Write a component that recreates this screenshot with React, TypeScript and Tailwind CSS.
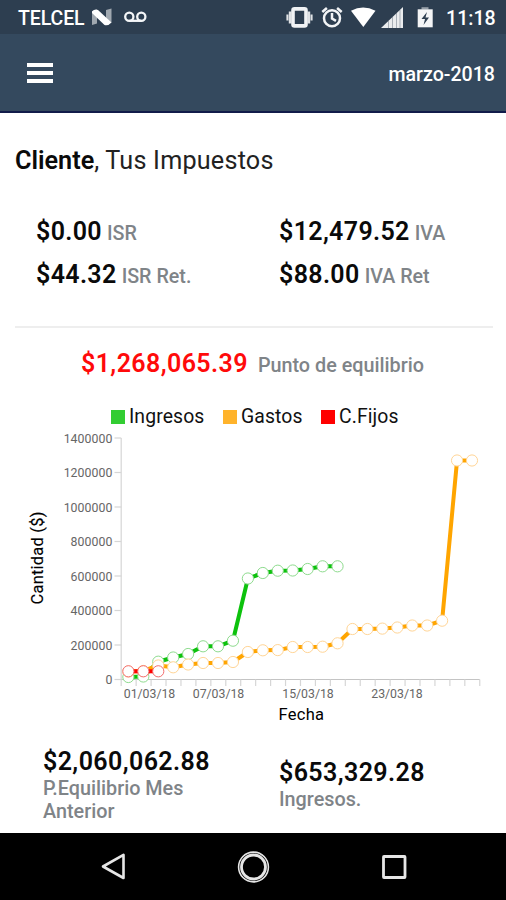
const STEP = 14.94;
const AXIS_X = 121.2;
const px = (i: number) => AXIS_X - 0.3 + STEP * (i + 0.5);

const ingresos = [677, 676.5, 661.7, 657.5, 654, 646.3, 646.3, 640.7, 578.5, 573, 570.7, 570.5, 569, 566.3, 566.3];
const gastos = [671.5, 671, 665.5, 667.3, 664.5, 663, 663, 662, 652, 650.3, 650.1, 647, 647, 646.7, 643.3, 629, 629, 628.6, 627.5, 625.5, 625.5, 620.7, 460.5, 460.5];
const fijos = [671.3, 671.3, 671.3];

const yTicks = [
  { label: "1400000", y: 438 },
  { label: "1200000", y: 472.5 },
  { label: "1000000", y: 507 },
  { label: "800000", y: 541.5 },
  { label: "600000", y: 576 },
  { label: "400000", y: 610.5 },
  { label: "200000", y: 645 },
  { label: "0", y: 679.5 },
];
const xLabels = [
  { label: "01/03/18", x: 149.5 },
  { label: "07/03/18", x: 218.5 },
  { label: "15/03/18", x: 308 },
  { label: "23/03/18", x: 397 },
];

function Series({ ys, line, ring }: { ys: number[]; line: string; ring: string }) {
  return (
    <g>
      <polyline points={ys.map((y, i) => `${px(i)},${y}`).join(" ")} fill="none" stroke={line} strokeWidth="4" strokeLinejoin="round" />
      {ys.map((y, i) => (
        <circle key={i} cx={px(i)} cy={y} r="5.6" fill="#fff" stroke={ring} strokeWidth="1" />
      ))}
    </g>
  );
}

function Chart() {
  return (
    <svg className="block h-[298px] w-full" viewBox="0 432 506 298">
      <g stroke="#d6d6d6" strokeWidth="1.2" fill="none">
        <path d="M121.2 438V679.5" />
        <path d="M121.2 679.5H479.8" stroke="#c4c4c4" />
        {yTicks.map((t) => (
          <path key={t.label} d={`M114.5 ${t.y}H121.2`} />
        ))}
        {Array.from({ length: 25 }, (_, i) => (
          <path key={i} d={`M${AXIS_X + i * STEP} 679.5V686`} />
        ))}
      </g>
      <g fill="#666" fontSize="12.3" fontFamily="Roboto, sans-serif">
        {yTicks.map((t) => (
          <text key={t.label} x="112.3" y={t.y + 4.7} textAnchor="end" textLength={t.label.length * 6.95}>{t.label}</text>
        ))}
        {xLabels.map((t) => (
          <text key={t.label} x={t.x} y="698" textAnchor="middle" textLength="51.5">{t.label}</text>
        ))}
      </g>
      <g fill="#000" fontSize="16.5" fontFamily="Roboto, sans-serif">
        <text x="278.5" y="719.5" textLength="45.5">Fecha</text>
        <text transform="translate(42.8 604.5) rotate(-90)" textLength="93" stroke="#000" strokeWidth=".15">Cantidad ($)</text>
      </g>
      <Series ys={ingresos} line="#0dc20d" ring="#8edb8e" />
      <Series ys={gastos} line="#ffa500" ring="#ffd596" />
      <Series ys={fijos} line="#ff0000" ring="#f36d6d" />
    </svg>
  );
}

function Tax({ amount, label }: { amount: string; label: string }) {
  return (
    <div className="flex h-[43px] items-baseline whitespace-nowrap">
      <span className="text-[25px] font-semibold tracking-[0.35px] text-[#0a0a0a]">{amount}</span>
      <span className="ml-[5px] text-[19.7px] font-medium text-[#7f8488]">{label}</span>
    </div>
  );
}

function StatusIcons() {
  return (
    <svg className="h-[34px] w-[160px]" viewBox="280 0 160 34" fill="#fff">
      <rect x="293" y="8.9" width="13" height="17" rx="1.5" fill="none" stroke="#f0f2f4" strokeWidth="3.6" />
      <path d="M286.400 14.500h2v6h-2zM288.8 11.500h2.600v12h-2.600zM307.600 11.500h2.600v12h-2.600zM310.600 14.500h2v6h-2z" opacity=".85" />
      <g fill="none" stroke="#f2f4f6" strokeWidth="2.500">
        <circle cx="332" cy="18.300" r="8" />
        <path d="M332 13v5.5l4 2.4M322.3 12l4.6-4M341.7 12l-4.6-4" />
      </g>
      <path d="M351 10.7Q363 4.5 375.5 10.7L363.3 27z" />
      <path d="M403 7v21H381z" opacity=".9" />
      <path d="M388.5 21v7M392.5 17v11M396.5 13v15M400 10v18" stroke="#2d3e50" strokeWidth="1" opacity=".35" />
      <path d="M421.500 7.200h7v2.300h-7z" opacity=".5" />
      <path d="M417.700 9.300h15v18h-15z" opacity=".95" />
      <path d="M427 12l-5.500 7h3.500l-1.500 6 5.500-7.500h-3.500z" fill="#2d3e50" />
    </svg>
  );
}

function Legend({ color, label }: { color: string; label: string }) {
  return (
    <div className="flex items-center">
      <span className={`mr-[4px] size-[14px] ${color}`} />
      <span className="text-[19.4px] leading-6 tracking-[0.1px] text-[#111]">{label}</span>
    </div>
  );
}

export default function App() {
  return (
    <div className="flex h-[900px] w-[506px] flex-col overflow-hidden bg-white font-['Roboto',sans-serif]">
      <div className="flex h-[34px] shrink-0 items-center bg-[#2d3e50] pl-[18px] text-white">
        <span className="w-[68px] pt-[3px] text-[19.5px] font-medium tracking-[-0.1px]">TELCEL</span>
        <svg className="ml-[4px] h-[34px] w-[62px]" viewBox="90 0 62 34" fill="#fff">
          <path d="M92 11l5-1.500v14l-5 1.500zM106 10l5.500-1.500v14l-5.500 2z" opacity=".55" />
          <path d="M92 11.500q3-3 6-1.500l13.500 12.500q-3 3.500-7 2.500L92 13z" />
          <g fill="none" stroke="#f4f6f8" strokeWidth="2.300">
            <circle cx="129.300" cy="16.700" r="4.100" />
            <circle cx="141.300" cy="16.700" r="4.100" />
            <path d="M129.300 20.800h12" />
          </g>
        </svg>
        <div className="ml-auto flex items-center">
          <StatusIcons />
          <span className="w-[66px] pl-[6px] pt-[3px] text-[19.6px] font-medium">11:18</span>
        </div>
      </div>
      <header className="flex h-[79px] shrink-0 items-center justify-between border-b-2 border-[#111b4a] bg-[#34495e] pl-[27px] pr-[11px] text-white">
        <div className="mt-[1px] flex flex-col gap-[4px]">
          <i className="h-[4px] w-[26px] bg-white" />
          <i className="h-[4px] w-[26px] bg-white" />
          <i className="h-[4px] w-[26px] bg-white" />
        </div>
        <span className="mt-[5px] text-[19.6px] font-medium">marzo-2018</span>
      </header>

      <main className="flex flex-1 flex-col">
        <h1 className="mt-[33px] pl-[15px] text-[25.2px] leading-[30px] text-[#222]">
          <b className="font-semibold text-[#0a0a0a]">Cliente</b><span className="tracking-[0.2px]">, Tus Impuestos</span>
        </h1>
        <section className="mt-[37px] grid grid-cols-[243px_1fr] pl-[36px]">
          <Tax amount="$0.00" label="ISR" />
          <Tax amount="$12,479.52" label="IVA" />
          <Tax amount="$44.32" label="ISR Ret." />
          <Tax amount="$88.00" label="IVA Ret" />
        </section>
        <hr className="ml-[15px] mr-[13px] mt-[27px] border-t-2 border-[#eee]" />
        <div className="mt-[17px] flex items-baseline pl-[81px]">
          <span className="text-[25px] font-semibold tracking-[0.4px] text-[#ff0a0a]">$1,268,065.39</span>
          <span className="ml-[10px] text-[19.8px] font-medium text-[#7f8488]">Punto de equilibrio</span>
        </div>
        <div className="mt-[22px] flex h-[24px] gap-[18.5px] pl-[111px]">
          <Legend color="bg-[#32cd32]" label="Ingresos" />
          <Legend color="bg-[#ffb32b]" label="Gastos" />
          <Legend color="bg-[#ff0000]" label="C.Fijos" />
        </div>
        <div className="mt-[3px]">
          <Chart />
        </div>
        <section className="grid grid-cols-[236px_1fr] pl-[43px]">
          <div className="mt-[17px]">
            <div className="text-[25px] font-semibold leading-[30px] tracking-[0.4px] text-[#0a0a0a]">$2,060,062.88</div>
            <div className="w-[170px] text-[19.8px] font-medium leading-[23px] text-[#7f8488]">P.Equilibrio Mes Anterior</div>
          </div>
          <div className="mt-[28px]">
            <div className="text-[25px] font-semibold leading-[30px] tracking-[0.4px] text-[#0a0a0a]">$653,329.28</div>
            <div className="text-[19.8px] font-medium leading-[23px] text-[#7f8488]">Ingresos.</div>
          </div>
        </section>
      </main>

      <nav className="h-[67px] shrink-0 bg-black">
        <svg className="h-[67px] w-full" viewBox="0 833 506 67" fill="none" stroke="#e6e6e6" strokeWidth="2.600">
          <path d="M123.500 854.800V878L103 866.500z" strokeLinejoin="round" />
          <circle cx="253.500" cy="867" r="14.900" strokeWidth="1.600" />
          <circle cx="253.500" cy="867" r="12" strokeWidth="2.800" />
          <rect x="383.500" y="856.500" width="21.500" height="21" rx=".5" strokeWidth="2.800" />
        </svg>
      </nav>
    </div>
  );
}
